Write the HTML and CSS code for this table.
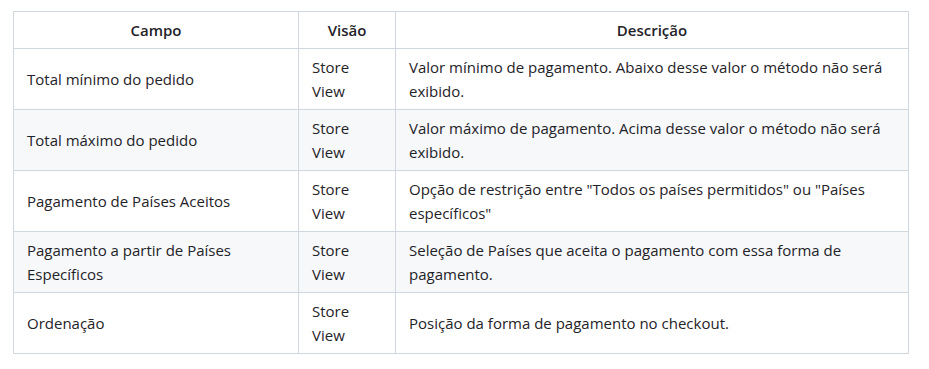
FILE: index.html
```html
<!DOCTYPE html>
<html lang="pt">
<head>
<meta charset="utf-8">
<link rel="stylesheet" href="styles.css">
</head>
<body>
<table class="tbl">
  <colgroup>
    <col class="c1">
    <col class="c2">
    <col class="c3">
  </colgroup>
  <thead>
    <tr><th>Campo</th><th>Visão</th><th>Descrição</th></tr>
  </thead>
  <tbody>
    <tr><td>Total mínimo do pedido</td><td>Store View</td><td>Valor mínimo de pagamento. Abaixo desse valor o método não será exibido.</td></tr>
    <tr><td>Total máximo do pedido</td><td>Store View</td><td>Valor máximo de pagamento. Acima desse valor o método não será exibido.</td></tr>
    <tr><td>Pagamento de Países Aceitos</td><td>Store View</td><td>Opção de restrição entre "Todos os países permitidos" ou "Países específicos"</td></tr>
    <tr><td>Pagamento a partir de Países Específicos</td><td>Store View</td><td>Seleção de Países que aceita o pagamento com essa forma de pagamento.</td></tr>
    <tr><td>Ordenação</td><td>Store View</td><td>Posição da forma de pagamento no checkout.</td></tr>
  </tbody>
</table>
</body>
</html>
```
FILE: styles.css
```css
html, body { margin: 0; background: #ffffff; }
body {
  padding: 11px 13px;
  font-family: "Open Sans", "Noto Sans", sans-serif;
  font-size: 15px;
  line-height: 24px;
  color: #1f2328;
}
.tbl {
  border-collapse: collapse;
  table-layout: fixed;
  width: 895px;
}
.c1 { width: 285px; }
.c2 { width: 97px; }
.c3 { width: 513px; }
.tbl th, .tbl td {
  border: 1px solid #d0d7de;
  padding: 6px 13px;
  vertical-align: middle;
}
.tbl th { font-weight: 600; text-align: center; }
.tbl td { text-align: left; }
.tbl tbody tr:nth-child(2n) { background: #f6f8fa; }
```
